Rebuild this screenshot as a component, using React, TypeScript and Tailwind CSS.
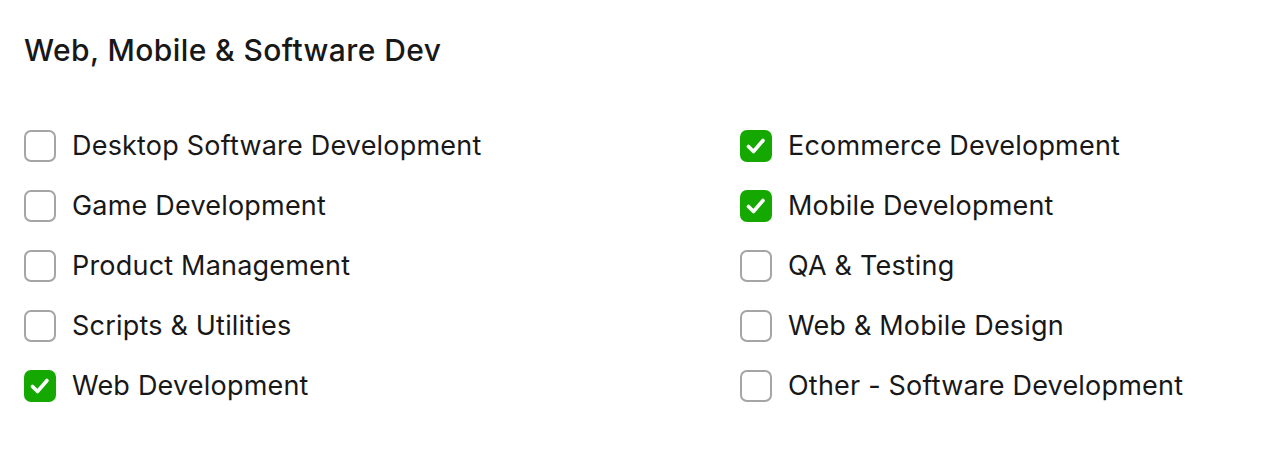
const left = [
  { label: 'Desktop Software Development', checked: false },
  { label: 'Game Development', checked: false },
  { label: 'Product Management', checked: false },
  { label: 'Scripts & Utilities', checked: false },
  { label: 'Web Development', checked: true },
];

const right = [
  { label: 'Ecommerce Development', checked: true },
  { label: 'Mobile Development', checked: true },
  { label: 'QA & Testing', checked: false },
  { label: 'Web & Mobile Design', checked: false },
  { label: 'Other - Software Development', checked: false },
];

function Check({ label, checked }: { label: string; checked: boolean }) {
  return (
    <label className="flex items-center h-[60px] gap-4">
      {checked ? (
        <span className="w-8 h-8 rounded-[7px] bg-[#14a800] flex items-center justify-center">
          <svg width="32" height="32" viewBox="0 0 32 32" fill="none">
            <path d="M8.5 16.5l5 5 9.5-11" stroke="white" strokeWidth="3.6" strokeLinecap="round" strokeLinejoin="round" />
          </svg>
        </span>
      ) : (
        <span className="w-8 h-8 rounded-[7px] border-2 border-[#a5a5a5] bg-white" />
      )}
      <span className="text-[27px] text-[#181818] tracking-[0.2px]">{label}</span>
    </label>
  );
}

export default function App() {
  return (
    <div className="w-[1280px] h-[464px] bg-white px-6 pt-[28px] font-['Inter',sans-serif]">
      <h2 className="text-[30px] font-medium text-[#181818] leading-[44px] tracking-[0.4px]">Web, Mobile &amp; Software Dev</h2>
      <div className="grid grid-cols-[716px_1fr] mt-[44px]">
        <div className="flex flex-col">
          {left.map((item) => (
            <Check key={item.label} {...item} />
          ))}
        </div>
        <div className="flex flex-col">
          {right.map((item) => (
            <Check key={item.label} {...item} />
          ))}
        </div>
      </div>
    </div>
  );
}
